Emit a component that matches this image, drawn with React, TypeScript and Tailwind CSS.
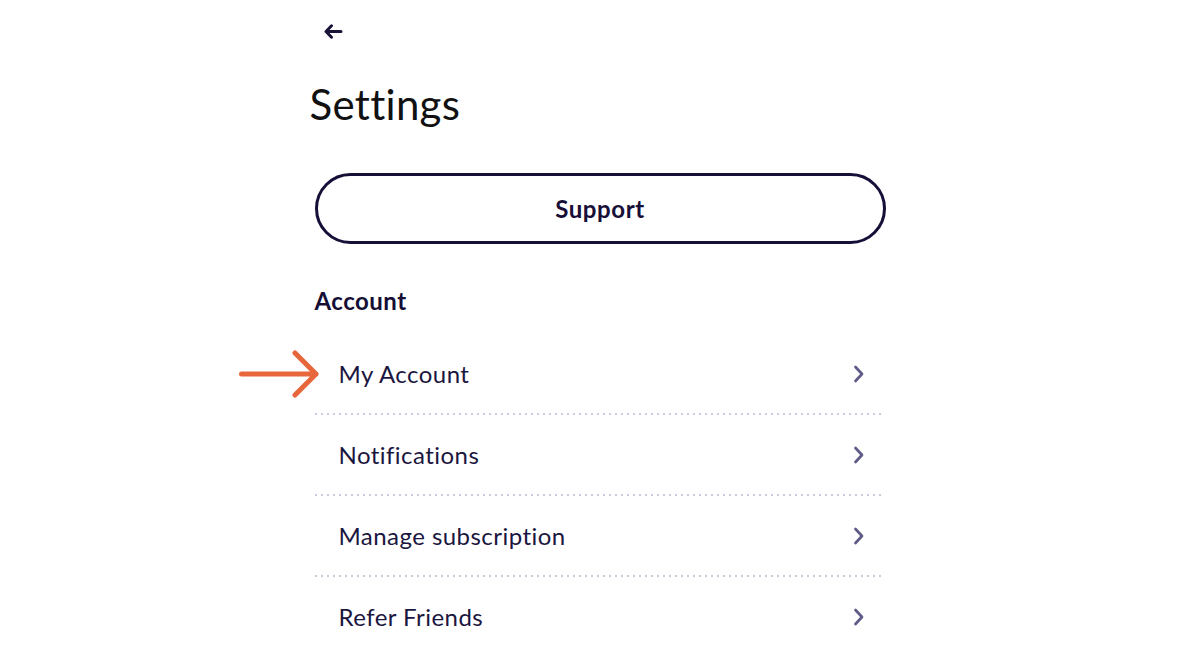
import React from "react";

const rows = ["My Account", "Notifications", "Manage subscription", "Refer Friends"];

function Chevron() {
  return (
    <svg width="12" height="18" viewBox="0 0 12 18" fill="none">
      <path d="M2.5 2 L9 9 L2.5 16" stroke="#5f5b88" strokeWidth="2.7" strokeLinecap="round" strokeLinejoin="round" />
    </svg>
  );
}

export default function App() {
  return (
    <div className="w-[1200px] h-[660px] bg-white overflow-hidden" style={{ fontFamily: "Lato, 'Noto Sans', sans-serif" }}>
      <div className="mx-auto w-[571px] pt-[24px]">
        <div className="ml-[9px] h-[14px]">
          <svg width="19" height="15" viewBox="0 0 19 15" fill="none">
            <path d="M17 7.5 H2 M7.5 1.8 L2 7.5 L7.5 13.2" stroke="#1a1338" strokeWidth="3" strokeLinecap="round" strokeLinejoin="round" />
          </svg>
        </div>
        <h1 className="mt-[45px] -ml-[5px] text-[42px] leading-[42px] text-[#111111] font-normal tracking-[0.3px]">Settings</h1>
        <button className="mt-[48px] w-full h-[71px] rounded-full border-[3px] border-[#170f38] flex items-center justify-center text-[24px] leading-[24px] font-bold text-[#170f38] tracking-[0.6px]">
          Support
        </button>
        <div className="mt-[45px] text-[24px] leading-[24px] font-bold text-[#150e35] tracking-[0.5px]">Account</div>
        <div className="mt-[21px] flex flex-col">
          {rows.map((r, i) => (
            <div key={r} className="flex flex-col">
              <div className="relative h-[79px] flex items-center justify-between pl-[24px] pr-[21px]">
                <span className="text-[24px] leading-[24px] text-[#1b1640] tracking-[0.45px]">{r}</span>
                <Chevron />
                {i === 0 && (
                  <svg className="absolute left-[-76px] top-[16px]" width="82" height="48" viewBox="0 0 82 48" fill="none">
                    <path d="M2.5 24 H77 M56 3 L77 24 L56 45" stroke="#e8663b" strokeWidth="5" strokeLinecap="round" strokeLinejoin="round" />
                  </svg>
                )}
              </div>
              {i < rows.length - 1 && (
                <div className="h-[2px] w-[568px] bg-[linear-gradient(to_right,#cbc9dc_2px,transparent_2px)] bg-[length:6px_2px]" />
              )}
            </div>
          ))}
        </div>
      </div>
    </div>
  );
}
